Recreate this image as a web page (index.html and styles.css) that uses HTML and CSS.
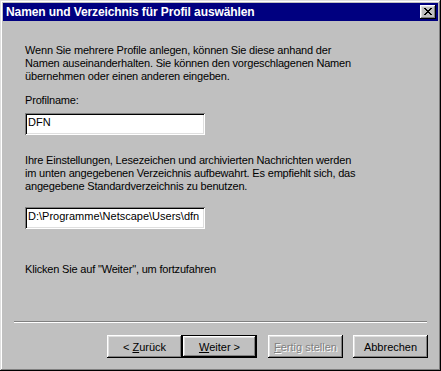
FILE: index.html
```html
<!DOCTYPE html>
<html lang="de">
<head>
<meta charset="UTF-8" />
<title>Namen und Verzeichnis für Profil auswählen</title>
<link rel="stylesheet" href="styles.css">
</head>
<body>

<div class="window">
  <div class="titlebar">
    <span class="title">Namen und Verzeichnis für Profil auswählen</span>
    <button class="close" type="button">
      <svg width="8" height="7" viewBox="0 0 8 7" shape-rendering="crispEdges">
        <path fill="#000" d="M0 0h2v1H0zM6 0h2v1H6zM1 1h2v1H1zM5 1h2v1H5zM2 2h4v1H2zM3 3h2v1H3zM2 4h4v1H2zM1 5h2v1H1zM5 5h2v1H5zM0 6h2v1H0zM6 6h2v1H6z"/>
      </svg>
    </button>
  </div>

  <div class="page">
    <p class="text intro">Wenn Sie mehrere Profile anlegen, können Sie diese anhand der<br>Namen auseinanderhalten. Sie können den vorgeschlagenen Namen<br>übernehmen oder einen anderen eingeben.</p>
    <p class="text label">Profilname:</p>
    <div class="field">DFN</div>

    <p class="text info">Ihre Einstellungen, Lesezeichen und archivierten Nachrichten werden<br>im unten angegebenen Verzeichnis aufbewahrt. Es empfiehlt sich, das<br>angegebene Standardverzeichnis zu benutzen.</p>
    <div class="field">D:\Programme\Netscape\Users\dfn</div>

    <p class="text hint">Klicken Sie auf "Weiter", um fortzufahren</p>
  </div>

  <div class="separator"></div>

  <div class="buttons">
    <button class="btn" type="button">&lt; <u>Z</u>urück</button>
    <button class="btn default" type="button"><u>W</u>eiter &gt;</button>
    <button class="btn disabled finish" type="button"><u>F</u>ertig stellen</button>
    <button class="btn cancel" type="button">Abbrechen</button>
  </div>
</div>

</body>
</html>
```

FILE: styles.css
```css
body {
  margin: 0;
  padding: 0;
  background: #c0c0c0;
  color: #000;
  font-family: 'Liberation Sans', Arial, sans-serif;
  font-size: 11px;
}
.window {
  width: 441px;
  height: 371px;
  box-sizing: border-box;
  padding: 3px;
  background: #c0c0c0;
  box-shadow: inset -1px -1px #000, inset 1px 1px #dfdfdf,
              inset -2px -2px #808080, inset 2px 2px #fff;
  display: flex;
  flex-direction: column;
}
.titlebar {
  height: 18px;
  background: #000080;
  color: #fff;
  display: flex;
  align-items: center;
  justify-content: space-between;
  padding: 0 2px 0 3px;
}
.title {
  font-weight: bold;
  font-size: 12px;
  letter-spacing: -0.1px;
  white-space: nowrap;
}
.close {
  width: 16px;
  height: 14px;
  padding: 0;
  border: none;
  background: #c0c0c0;
  box-shadow: inset -1px -1px #000, inset 1px 1px #fff,
              inset -2px -2px #808080, inset 2px 2px #dfdfdf;
  display: flex;
  align-items: center;
  justify-content: center;
}
.close svg {
  display: block;
  margin: 0 1px 1px 0;
}
.page {
  flex: 1;
  padding: 23px 0 0 22px;
}
.text {
  margin: 0;
  line-height: 13px;
  letter-spacing: -0.18px;
  white-space: nowrap;
}
.label {
  margin-top: 11px;
}
.info {
  margin-top: 19px;
}
.hint {
  margin-top: 34px;
}
.field {
  width: 180px;
  height: 22px;
  box-sizing: border-box;
  margin-top: 6px;
  padding: 3px 3px 0;
  background: #fff;
  line-height: 13px;
  white-space: nowrap;
  overflow: hidden;
  box-shadow: inset 1px 1px #808080, inset -1px -1px #fff,
              inset 2px 2px #000, inset -2px -2px #dfdfdf;
}
.info + .field {
  margin-top: 14px;
}
.separator {
  margin: 0 11px;
  height: 0;
  border-top: 1px solid #808080;
  border-bottom: 1px solid #fff;
}
.buttons {
  display: flex;
  justify-content: flex-end;
  padding: 12px 10px 10px 0;
}
.btn {
  width: 75px;
  height: 23px;
  box-sizing: border-box;
  padding: 0;
  border: none;
  background: #c0c0c0;
  color: #000;
  font-family: 'Liberation Sans', Arial, sans-serif;
  font-size: 11px;
  box-shadow: inset -1px -1px #000, inset 1px 1px #fff,
              inset -2px -2px #808080, inset 2px 2px #dfdfdf;
}
.btn.default {
  border: 1px solid #000;
}
.btn.disabled {
  color: #808080;
  text-shadow: 1px 1px #fff;
}
.finish {
  margin-left: 11px;
}
.cancel {
  margin-left: 10px;
}
```
